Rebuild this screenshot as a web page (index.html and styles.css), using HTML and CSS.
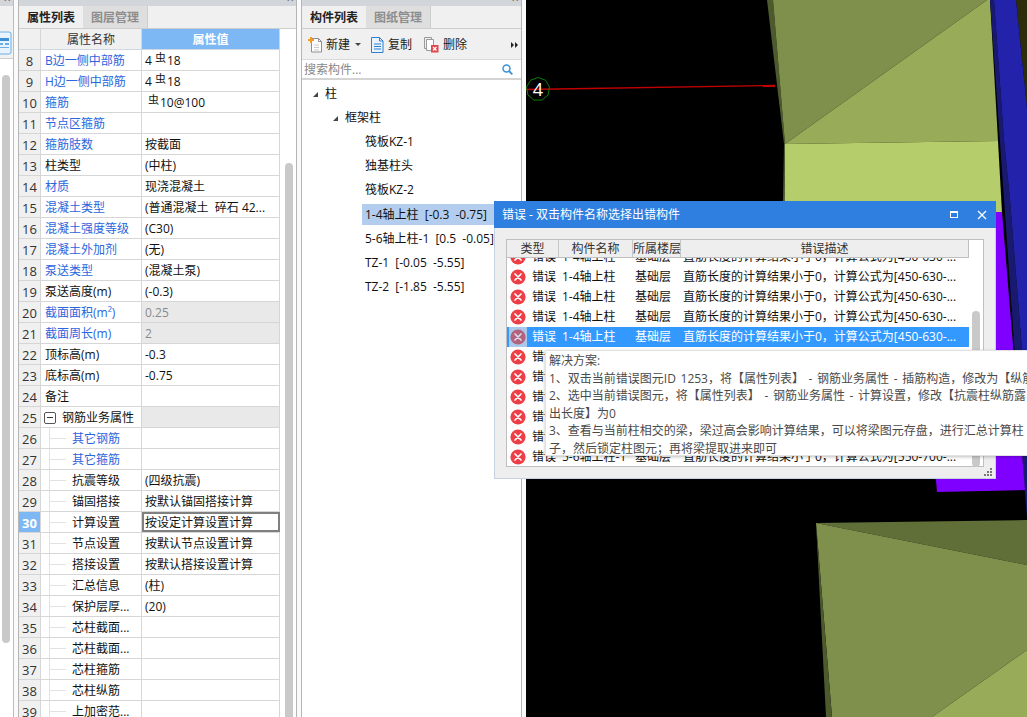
FILE: index.html
```html
<!DOCTYPE html>
<html lang="zh-CN">
<head>
<meta charset="utf-8">
<title>属性列表</title>
<link rel="stylesheet" href="styles.css">
</head>
<body>
<svg class="defs" width="0" height="0">
  <symbol id="err" viewBox="0 0 16 16">
    <circle cx="8" cy="8" r="7.6" fill="#ee3e46"/>
    <path d="M5 5l6 6M11 5l-6 6" stroke="#fff" stroke-width="1.7" stroke-linecap="round"/>
  </symbol>
  <symbol id="err-sel" viewBox="0 0 16 16">
    <circle cx="8" cy="8" r="7.6" fill="#b2617f"/>
    <path d="M5 5l6 6M11 5l-6 6" stroke="#d8dce8" stroke-width="1.7" stroke-linecap="round"/>
  </symbol>
</svg>

<aside class="sliver">
  <div class="topbar"><span class="closex">×</span></div>
  <div class="sliver-tool">
    <svg class="sliver-icon" width="12" height="24" viewBox="0 0 12 24"><path d="M-3 1h12a2 2 0 0 1 2 2v18a2 2 0 0 1-2 2H-3z" fill="#e8f3fd" stroke="#6aaee8"/><path d="M0 7h9v3H0z" fill="#3b8fd8"/><path d="M0 12h3v2H0zM5 12h4v2H5zM0 16h9v1H0z" fill="#6aaee8"/></svg>
  </div>
  <div class="sliver-track"><div class="sliver-thumb"></div></div>
</aside>

<section class="panel props">
  <div class="topbar"><span class="closex">×</span></div>
  <div class="tabs">
    <div class="tab active">属性列表</div>
    <div class="tab">图层管理</div>
  </div>
  <div class="props-body">
    <div class="grid">
      <div class="row head"><div class="num"></div><div class="name">属性名称</div><div class="val">属性值</div></div>
      <div class="row"><div class="num">8</div><div class="name link">B边一侧中部筋</div><div class="val">4<span class="rebar">虫</span>18</div></div>
      <div class="row"><div class="num">9</div><div class="name link">H边一侧中部筋</div><div class="val">4<span class="rebar">虫</span>18</div></div>
      <div class="row"><div class="num">10</div><div class="name link">箍筋</div><div class="val"><span class="rebar">虫</span>10@100</div></div>
      <div class="row"><div class="num">11</div><div class="name link">节点区箍筋</div><div class="val"></div></div>
      <div class="row"><div class="num">12</div><div class="name link">箍筋肢数</div><div class="val">按截面</div></div>
      <div class="row"><div class="num">13</div><div class="name">柱类型</div><div class="val">(中柱)</div></div>
      <div class="row"><div class="num">14</div><div class="name link">材质</div><div class="val">现浇混凝土</div></div>
      <div class="row"><div class="num">15</div><div class="name link">混凝土类型</div><div class="val">(普通混凝土&nbsp; 碎石 42...</div></div>
      <div class="row"><div class="num">16</div><div class="name link">混凝土强度等级</div><div class="val">(C30)</div></div>
      <div class="row"><div class="num">17</div><div class="name link">混凝土外加剂</div><div class="val">(无)</div></div>
      <div class="row"><div class="num">18</div><div class="name link">泵送类型</div><div class="val">(混凝土泵)</div></div>
      <div class="row"><div class="num">19</div><div class="name">泵送高度(m)</div><div class="val">(-0.3)</div></div>
      <div class="row"><div class="num">20</div><div class="name link">截面面积(m²)</div><div class="val off">0.25</div></div>
      <div class="row"><div class="num">21</div><div class="name link">截面周长(m)</div><div class="val off">2</div></div>
      <div class="row"><div class="num">22</div><div class="name">顶标高(m)</div><div class="val">-0.3</div></div>
      <div class="row"><div class="num">23</div><div class="name">底标高(m)</div><div class="val">-0.75</div></div>
      <div class="row"><div class="num">24</div><div class="name">备注</div><div class="val"></div></div>
      <div class="row"><div class="num">25</div><div class="name group"><span class="minus"></span>钢筋业务属性</div><div class="val off"></div></div>
      <div class="row sub"><div class="num">26</div><div class="name link">其它钢筋</div><div class="val"></div></div>
      <div class="row sub"><div class="num">27</div><div class="name link">其它箍筋</div><div class="val"></div></div>
      <div class="row sub"><div class="num">28</div><div class="name">抗震等级</div><div class="val">(四级抗震)</div></div>
      <div class="row sub"><div class="num">29</div><div class="name">锚固搭接</div><div class="val">按默认锚固搭接计算</div></div>
      <div class="row sub current"><div class="num">30</div><div class="name">计算设置</div><div class="val">按设定计算设置计算</div></div>
      <div class="row sub"><div class="num">31</div><div class="name">节点设置</div><div class="val">按默认节点设置计算</div></div>
      <div class="row sub"><div class="num">32</div><div class="name">搭接设置</div><div class="val">按默认搭接设置计算</div></div>
      <div class="row sub"><div class="num">33</div><div class="name">汇总信息</div><div class="val">(柱)</div></div>
      <div class="row sub"><div class="num">34</div><div class="name">保护层厚...</div><div class="val">(20)</div></div>
      <div class="row sub"><div class="num">35</div><div class="name">芯柱截面...</div><div class="val"></div></div>
      <div class="row sub"><div class="num">36</div><div class="name">芯柱截面...</div><div class="val"></div></div>
      <div class="row sub"><div class="num">37</div><div class="name">芯柱箍筋</div><div class="val"></div></div>
      <div class="row sub"><div class="num">38</div><div class="name">芯柱纵筋</div><div class="val"></div></div>
      <div class="row sub"><div class="num">39</div><div class="name">上加密范...</div><div class="val"></div></div>
    </div>
    <div class="props-track"><div class="props-thumb"></div></div>
  </div>
</section>

<section class="panel comps">
  <div class="topbar"><span class="closex">×</span></div>
  <div class="tabs">
    <div class="tab active">构件列表</div>
    <div class="tab">图纸管理</div>
  </div>
  <div class="toolbar">
    <div class="tool">
      <svg width="15" height="16" viewBox="0 0 15 16"><path d="M3.500 1.500h7l3 3v10.500h-10z" fill="#fff" stroke="#8f8f8f"/><path d="M10.500 1.500v3h3" fill="none" stroke="#8f8f8f"/><path d="M6 8h5M6 10.500h5M6 13h5" stroke="#c9c9c9"/><path d="M0 3h6M3 0v6" stroke="#f59a23" stroke-width="2"/></svg>
      <span>新建</span><span class="caret"></span>
    </div>
    <div class="tool">
      <svg width="14" height="16" viewBox="0 0 14 16"><path d="M1.500 .5h8l3.500 3.500v11.500h-11.500z" fill="#eaf3fc" stroke="#2d7fd0"/><path d="M9.500 .5v3.500h3.500" fill="none" stroke="#2d7fd0"/><path d="M4 7h7M4 9.500h7M4 12h7" stroke="#2d7fd0"/></svg>
      <span>复制</span>
    </div>
    <div class="tool">
      <svg width="16" height="16" viewBox="0 0 16 16"><path d="M3.500 2.500h7v11h-7z" fill="#fff" stroke="#9a9a9a"/><path d="M1.500 .5h7v2" fill="none" stroke="#9a9a9a"/><path d="M1.500 .5v11h2" fill="none" stroke="#9a9a9a"/><path d="M8 8h7.500v7.500H8z" fill="#e0474c"/><path d="M10 10l3.500 3.500M13.500 10L10 13.500" stroke="#fff" stroke-width="1.200"/></svg>
      <span>删除</span>
    </div>
    <div class="more"><span class="tri"></span><span class="tri"></span></div>
  </div>
  <div class="search">
    <span class="search-text">搜索构件...</span>
    <svg width="11" height="11" viewBox="0 0 11 11"><circle cx="4.500" cy="4.500" r="3.500" fill="none" stroke="#3d93d8" stroke-width="1.500"/><path d="M7 7l3.300 3.300" stroke="#3d93d8" stroke-width="1.800"/></svg>
  </div>
  <div class="tree">
    <div class="node lvl0"><span class="expand"></span>柱</div>
    <div class="node lvl1"><span class="expand"></span>框架柱</div>
    <div class="node lvl2">筏板KZ-1</div>
    <div class="node lvl2">独基柱头</div>
    <div class="node lvl2">筏板KZ-2</div>
    <div class="node lvl2"><span class="picked">1-4轴上柱 [-0.3 -0.75]</span></div>
    <div class="node lvl2">5-6轴上柱-1 [0.5 -0.05]</div>
    <div class="node lvl2">TZ-1 [-0.05 -5.55]</div>
    <div class="node lvl2">TZ-2 [-1.85 -5.55]</div>
  </div>
</section>

<main class="viewport">
  <svg class="scene" width="501" height="717" viewBox="526 0 501 717">
    <rect x="526" y="0" width="501" height="717" fill="#000"/>
    <path d="M767 0h6l12 144-1.500 110H781l2-54 1-56z" fill="#4c5a2d"/>
    <path d="M773 0h214L785 144z" fill="#7f8f4c"/>
    <path d="M987 0h3l8 141-213 3z" fill="#98ab58"/>
    <path d="M785 144l213-3 4 72 0 60H784z" fill="#b5cd6a"/>
    <path d="M1016 0h11v108z" fill="#2d2c0b"/>
    <path d="M990 0h4l10 140 6 60 12 150 5 67v100l-4-47z" fill="#191970"/>
    <path d="M994 0h22l11 108v310l-5-68-12-150-6-60z" fill="#2222aa"/>
    <path d="M930 212h72l23 278-88 2-7-80z" fill="#7f00ff"/>
    <path d="M816 523l211-3v45z" fill="#606f37"/>
    <path d="M816 523l211 42v85l-95 67H832z" fill="#7f8f4c"/>
    <path d="M1027 650v67h-95z" fill="#98ab58"/>
    <path d="M816 523l16 194h-6z" fill="#4c5a2d"/>
    <path d="M526 89.500L775 85.500" stroke="#c40000" stroke-width="1.300" fill="none"/>
    <path d="M538 77.500l7.500 2.700 4 6.900-1.400 7.900-6.100 5.100h-8l-6.100-5.100-1.400-7.900 4-6.900z" fill="none" stroke="#0b7d0b"/>
    <text class="axis" x="538" y="96" text-anchor="middle">4</text>
  </svg>
</main>

<div class="dialog">
  <header class="dlg-title">
    <span class="dlg-caption">错误 - 双击构件名称选择出错构件</span>
    <span class="maxbox"></span>
    <svg width="10" height="10" viewBox="0 0 10 10"><path d="M1 1l8 8M9 1l-8 8" stroke="#fff" stroke-width="1.300"/></svg>
  </header>
  <div class="dlg-body">
    <div class="errtable">
      <div class="errmain">
        <div class="errhead">
          <div class="eh eh1">类型</div><div class="eh eh2">构件名称</div><div class="eh eh3">所属楼层</div><div class="eh eh4">错误描述</div>
        </div>
        <div class="errlist">
          <div class="errscroll">
            <div class="err"><svg class="eicon" width="16" height="16"><use href="#err"/></svg><span>错误</span><span>1-4轴上柱</span><span>基础层</span><span>直筋长度的计算结果小于0，计算公式为[450-630-...</span></div>
            <div class="err"><svg class="eicon" width="16" height="16"><use href="#err"/></svg><span>错误</span><span>1-4轴上柱</span><span>基础层</span><span>直筋长度的计算结果小于0，计算公式为[450-630-...</span></div>
            <div class="err"><svg class="eicon" width="16" height="16"><use href="#err"/></svg><span>错误</span><span>1-4轴上柱</span><span>基础层</span><span>直筋长度的计算结果小于0，计算公式为[450-630-...</span></div>
            <div class="err"><svg class="eicon" width="16" height="16"><use href="#err"/></svg><span>错误</span><span>1-4轴上柱</span><span>基础层</span><span>直筋长度的计算结果小于0，计算公式为[450-630-...</span></div>
            <div class="err selected"><span class="eicon-box"><svg class="eicon" width="16" height="16"><use href="#err-sel"/></svg></span><span>错误</span><span>1-4轴上柱</span><span>基础层</span><span>直筋长度的计算结果小于0，计算公式为[450-630-...</span></div>
            <div class="err"><svg class="eicon" width="16" height="16"><use href="#err"/></svg><span>错误</span><span>1-4轴上柱</span><span>基础层</span><span>直筋长度的计算结果小于0，计算公式为[450-630-...</span></div>
            <div class="err"><svg class="eicon" width="16" height="16"><use href="#err"/></svg><span>错误</span><span>1-4轴上柱</span><span>基础层</span><span>直筋长度的计算结果小于0，计算公式为[450-630-...</span></div>
            <div class="err"><svg class="eicon" width="16" height="16"><use href="#err"/></svg><span>错误</span><span>1-4轴上柱</span><span>基础层</span><span>直筋长度的计算结果小于0，计算公式为[450-630-...</span></div>
            <div class="err"><svg class="eicon" width="16" height="16"><use href="#err"/></svg><span>错误</span><span>1-4轴上柱</span><span>基础层</span><span>直筋长度的计算结果小于0，计算公式为[450-630-...</span></div>
            <div class="err"><svg class="eicon" width="16" height="16"><use href="#err"/></svg><span>错误</span><span>1-4轴上柱</span><span>基础层</span><span>直筋长度的计算结果小于0，计算公式为[450-630-...</span></div>
            <div class="err"><svg class="eicon" width="16" height="16"><use href="#err"/></svg><span>错误</span><span>5-6轴上柱-1</span><span>基础层</span><span>直筋长度的计算结果小于0，计算公式为[550-700-...</span></div>
          </div>
        </div>
      </div>
      <div class="errtrack"><div class="errthumb"></div></div>
    </div>
  </div>
  <svg class="grip" width="9" height="9" viewBox="0 0 9 9"><path d="M6 0h2v2H6zM3 3h2v2H3zM6 3h2v2H6zM0 6h2v2H0zM3 6h2v2H3zM6 6h2v2H6z" fill="#777"/></svg>
  <div class="tip">
    <div>解决方案:</div>
    <div>1、双击当前错误图元ID 1253，将【属性列表】 - 钢筋业务属性 - 插筋构造，修改为【纵筋锚固】</div>
    <div>2、选中当前错误图元，将【属性列表】 - 钢筋业务属性 - 计算设置，修改【抗震柱纵筋露</div>
    <div>出长度】为0</div>
    <div>3、查看与当前柱相交的梁，梁过高会影响计算结果，可以将梁图元存盘，进行汇总计算柱</div>
    <div>子，然后锁定柱图元；再将梁提取进来即可</div>
  </div>
</div>
</body>
</html>
```

FILE: styles.css
```css
* { box-sizing: border-box; }

html, body { margin: 0; height: 100%; }

body {
  position: relative;
  display: flex;
  width: 1027px;
  height: 717px;
  overflow: hidden;
  background: #fafafa;
  color: #111;
  font: 12px/20px "Open Sans", "Noto Sans CJK SC", sans-serif;
}

.defs { position: absolute; }

.topbar {
  position: relative;
  height: 6px;
  flex: none;
  overflow: hidden;
  background: #d2d5da;
}

.closex {
  position: absolute;
  right: 2px;
  top: -8px;
  color: #666;
  font-size: 13px;
  line-height: 13px;
}

/* left sliver */
.sliver {
  width: 14px;
  flex: none;
  display: flex;
  flex-direction: column;
  background: #fff;
  border-right: 1px solid #bcbcbc;
}

.sliver-tool {
  height: 53px;
  padding-top: 25px;
  flex: none;
  background: #f1f1f1;
  border-bottom: 1px solid #cfcfcf;
}

.sliver-icon { display: block; }

.sliver-track { padding: 16px 3px 0 2px; flex: 1; }

.sliver-thumb {
  width: 8px;
  height: 568px;
  border-radius: 4px;
  background: #c9c9c9;
}

/* panels */
.panel {
  flex: none;
  display: flex;
  flex-direction: column;
  background: #fff;
  border-left: 1px solid #b5b5b5;
  border-right: 1px solid #b5b5b5;
}

.props { width: 279px; margin-left: 4px; }
.comps { width: 221px; margin-left: 4px; }

.tabs {
  display: flex;
  height: 23px;
  flex: none;
  background: #f0f0f0;
  border-bottom: 1px solid #cdcdcd;
}

.tab {
  width: 65px;
  line-height: 24px;
  text-align: center;
  color: #8d8d8d;
  font-weight: 700;
  background: #dedede;
  border-right: 1px solid #cdcdcd;
}

.tab.active { width: 64px; color: #222; background: #f0f0f0; border-right: 0; }

/* property grid */
.props-body { display: flex; flex: 1; min-height: 0; }

.grid { width: 261px; flex: none; }

.row {
  display: grid;
  grid-template-columns: 22px 101px 138px;
  height: 21px;
  border-bottom: 1px solid #d6d6d6;
}

.row > div {
  line-height: 22px;
  white-space: nowrap;
  overflow: hidden;
  border-right: 1px solid #d6d6d6;
}

.num {
  text-align: center;
  font-size: 13px;
  color: #333;
  background: #f0f0f0;
}

.name { padding-left: 4px; }
.val { padding-left: 3px; }
.link { color: #2b66dd; }
.off { color: #8a8a8a; background: #e9e9e9; }

.rebar {
  display: inline-block;
  margin: 0 1px 0 3px;
  font-size: 11px;
  line-height: 10px;
  vertical-align: 3px;
}

.row.head { height: 21px; border-bottom: 1px solid #cfd8e2; }

.row.head .num,
.row.head .name {
  background: #f0f0f0;
  text-align: center;
  color: #333;
  padding: 0;
}

.row.head .val {
  background: #7db8f5;
  color: #fff;
  font-weight: 700;
  text-align: center;
  padding: 0;
}

.row .group {
  display: flex;
  align-items: center;
  padding: 1px 0 0 3px;
}

.minus {
  position: relative;
  width: 12px;
  height: 12px;
  margin-right: 6px;
  border: 1px solid #555;
  border-radius: 2px;
  background: #fff;
}

.minus::after {
  content: "";
  position: absolute;
  left: 2px;
  top: 4px;
  width: 6px;
  height: 1px;
  background: #333;
}

.sub .name {
  display: flex;
  padding-left: 8px;
}

.sub .name::before {
  content: "";
  flex: none;
  width: 17px;
  height: 21px;
  margin-right: 5px;
  border-left: 1px solid #e2e2e2;
  background: linear-gradient(#e2e2e2, #e2e2e2) 0 10px / 16px 1px no-repeat;
}

.current .num {
  background: #7db8f5;
  color: #fff;
  font-weight: 700;
}

.row.current .val {
  border: 2px solid #808080;
  padding-left: 1px;
  line-height: 18px;
}

.props-track { padding: 134px 0 0 5px; flex: 1; }

.props-thumb {
  width: 8px;
  height: 570px;
  border-radius: 4px;
  background: #c9c9c9;
}

/* component list */
.toolbar {
  display: flex;
  align-items: center;
  height: 31px;
  flex: none;
  padding: 1px 0 0 6px;
  background: #f0f0f0;
  border-bottom: 1px solid #dadada;
}

.tool { display: flex; align-items: center; gap: 4px; margin-right: 11px; color: #222; line-height: 22px; }

.tool:first-child { gap: 3px; margin-right: 9px; }

.caret {
  width: 0;
  height: 0;
  margin-left: 2px;
  border: 3px solid transparent;
  border-top: 3px solid #444;
  border-bottom: 0;
}

.more { display: flex; margin-left: auto; margin-right: 3px; gap: 1px; }

.tri {
  width: 0;
  height: 0;
  border-left: 3px solid #222;
  border-top: 3px solid transparent;
  border-bottom: 3px solid transparent;
}

.search {
  display: flex;
  align-items: center;
  justify-content: space-between;
  height: 20px;
  flex: none;
  padding: 1px 8px 0 2px;
  border-bottom: 2px solid #d4d4d4;
}

.search-text { color: #888; }

.tree { padding-top: 2px; overflow: hidden; white-space: nowrap; word-spacing: 3px; }

.node { display: flex; align-items: center; height: 24.1px; }

.lvl0 { padding-left: 11px; }
.lvl1 { padding-left: 31px; }
.lvl2 { padding-left: 63px; line-height: 22px; }

.expand {
  width: 0;
  height: 0;
  margin-right: 7px;
  border-left: 5px solid transparent;
  border-bottom: 5px solid #444;
}

.picked {
  margin-left: -3px;
  padding: 0 8px 0 3px;
  line-height: 21px;
  background: #b3cdee;
}

/* 3D viewport */
.viewport {
  flex: 1;
  margin-left: 4px;
  min-width: 0;
  overflow: hidden;
}

.scene { display: block; }

.axis { fill: #fff; font: 18px "Open Sans", sans-serif; }

/* floating error window */
.dialog {
  position: absolute;
  left: 494px;
  top: 201px;
  width: 502px;
  height: 278px;
  display: flex;
  flex-direction: column;
  background: #eeeeee;
  border: 1px solid #c4d2e2;
  border-top: 0;
}

.dlg-title {
  display: flex;
  align-items: center;
  height: 27px;
  flex: none;
  margin: 0 -1px;
  padding: 0 9px 0 8px;
  color: #fff;
  background: #2f7fe0;
}

.dlg-caption { flex: 1; line-height: 22px; }

.maxbox {
  width: 8px;
  height: 7px;
  margin-right: 19px;
  border: 1px solid #fff;
  border-top-width: 2px;
}

.dlg-body { padding: 11px 11px 0 11px; flex: 1; min-height: 0; }

.errtable {
  display: flex;
  width: 478px;
  height: 228px;
  background: #fff;
  border: 1px solid #bfbfbf;
}

.errmain { width: 462px; flex: none; display: flex; flex-direction: column; }

.errhead {
  display: grid;
  grid-template-columns: 52px 74px 48px 1fr;
  height: 18px;
  flex: none;
  background: #eeeeee;
  border-bottom: 1px solid #bfbfbf;
  border-right: 1px solid #bfbfbf;
}

.eh {
  line-height: 17px;
  text-align: center;
  color: #333;
  white-space: nowrap;
  border-right: 1px solid #c8c8c8;
}

.eh4 { border-right: 0; }

.errlist { flex: 1; min-height: 0; overflow: hidden; }

.errscroll { margin-top: -11px; }

.err {
  display: grid;
  grid-template-columns: 25px 30px 73px 48px 1fr;
  align-items: center;
  height: 20px;
  white-space: nowrap;
}

.eicon { display: block; margin-left: 3px; }

.selected { color: #fff; background: #3399ff; }

.eicon-box {
  display: block;
  width: 18px;
  height: 20px;
  margin-left: 2px;
  padding-top: 2px;
  background: #a9c8ea;
}

.eicon-box .eicon { margin-left: 1px; }

.errtrack { flex: 1; padding: 71px 0 0 3px; }

.errthumb {
  width: 8px;
  height: 156px;
  border-radius: 4px;
  background: #c9c9c9;
}

.grip { position: absolute; right: 2px; bottom: 1px; }

.tip {
  position: absolute;
  left: 50px;
  top: 149px;
  width: 520px;
  height: 106px;
  padding: 1px 0 0 3px;
  color: #4a4a4a;
  line-height: 17.5px;
  word-spacing: 1.5px;
  white-space: nowrap;
  background: #fff;
  border: 1px solid #e2e2e2;
  box-shadow: 0 1px 3px rgba(0, 0, 0, .25);
}
```
